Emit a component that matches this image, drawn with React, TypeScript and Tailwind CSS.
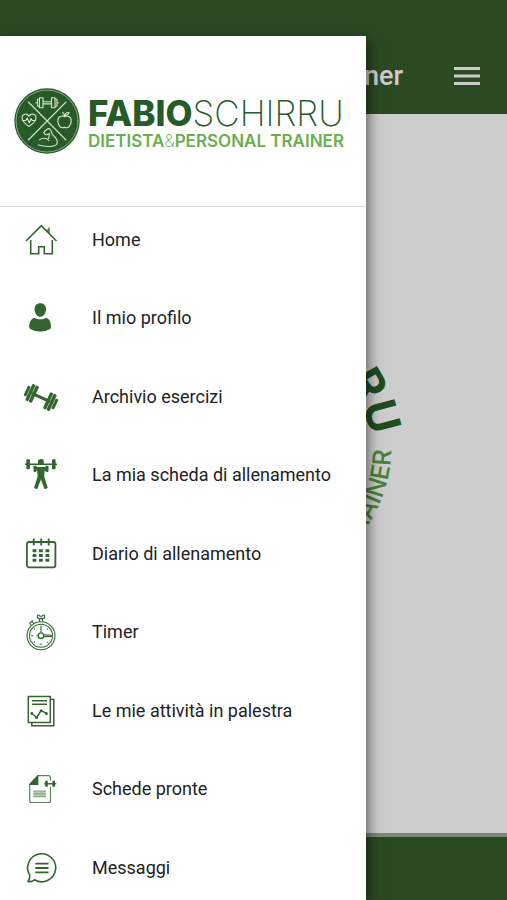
import type { ReactNode } from "react";

type MenuItem = {
  label: string;
  icon: ReactNode;
};

const icon = "w-8 h-8 shrink-0 overflow-visible text-[#33652f]";

function HomeIcon() {
  return (
    <svg className={icon} viewBox="0 0 32 32" fill="none" stroke="currentColor" strokeWidth="1.6">
      <path d="M1 17 16.3 1.6 31.5 17" />
      <path d="M5.7 16v13.7h8v-6.9h5.6v6.9h8V16" />
      <path d="M21.3 6.2h2.6M24 3.6v6" strokeWidth="1.3" />
    </svg>
  );
}

function ProfileIcon() {
  return (
    <svg className={icon} viewBox="0 0 32 32" fill="currentColor">
      <path d="M15.3 1.2c3.8 0 5.8 2.4 5.7 6-.1 4-2.4 7.6-5.7 7.6S9.7 11.2 9.6 7.200c-.1-3.600 1.900-6 5.700-6Z" />
      <path d="M9.5 15.7c3.2 2.2 8.400 2.200 11.600 0 3.600 1 5 4.500 4.900 9.800-.1 1.600-4.800 4-10.700 4S4.300 27.100 4.200 25.500c-.1-5.300 1.700-8.800 5.300-9.800Z" />
    </svg>
  );
}

function DumbbellIcon() {
  return (
    <svg className={icon} viewBox="0 0 32 32" fill="currentColor">
      <g transform="rotate(25 16 16.5)">
        <rect x="6" y="15" width="20" height="3" />
        <rect x="-.8" y="11" width="3" height="11" rx="1" />
        <rect x="2.6" y="7.5" width="3.4" height="18" rx="1" />
        <rect x="6.4" y="7.5" width="3.4" height="18" rx="1" />
        <rect x="22.2" y="7.5" width="3.4" height="18" rx="1" />
        <rect x="26" y="7.5" width="3.4" height="18" rx="1" />
        <rect x="29.8" y="11" width="3" height="11" rx="1" />
      </g>
    </svg>
  );
}

function LifterIcon() {
  return (
    <svg className={icon} viewBox="0 0 32 32" fill="currentColor">
      <rect x="1.3" y=".3" width="3.6" height="10" rx=".8" />
      <rect x="27" y=".3" width="3.6" height="10" rx=".8" />
      <path d="M0 4.500h32v1.500H0Z" />
      <circle cx="15.9" cy="3" r="3" />
      <path d="M8.500 6.800h3v1l2 .2h5l2-.2v-1h3v5.400c0 1-2.700 1-2.900 0l-.9-1-.5 6.300 3.600 11.500-3.200 1.200-3.700-9.700-3.700 9.700L9 29l3.600-11.500-.5-6.300-.8 1c-.2 1-2.800 1-2.800 0Z" />
    </svg>
  );
}

function CalendarIcon() {
  return (
    <svg className={icon} viewBox="0 0 32 32" fill="none" stroke="currentColor" strokeWidth="1.8">
      <rect x="1.9" y="4" width="28.5" height="25.3" rx="2" />
      <path d="M8.700.4v7.200M16.200.4v7.200M23.700.4v7.200" />
      <path d="M7.600 12.800h3.800m2.600 0h3.800m2.700 0h3.800M7.600 17.500h3.800m2.600 0h3.800m2.700 0h3.800M7.600 22.200h3.800m2.600 0h3.800m2.700 0h3.800" strokeWidth="2.9" />
    </svg>
  );
}

function TimerIcon() {
  return (
    <svg className={icon} viewBox="0 0 32 32" fill="none" stroke="currentColor" strokeWidth="1.1">
      <circle cx="16" cy="19.7" r="14" />
      <circle cx="16" cy="19.7" r="11.5" />
      <path d="M14.500 5.600V2.800h3v2.800M12.500-.8h1.800l.7 1h2l.7-1h1.800v3h-7Z" />
      <path d="m8.800 7.900-1.600-2.600-2.600 1.700L6.300 9.500M6.200 5.400l1.600-1" />
      <path d="M16 9.500v6.800M16 27.300v2M6 19.700h2.500m3 0h1.200m6.600-.8 6.700.3.600.6-.6.600-6.700.2" />
      <circle cx="16" cy="19.7" r="2.8" strokeWidth="1.4" />
      <path d="m9 12.700.8.8m13.200-.8-.8.8M9 26.700l.8-.8m13.200.8-.8-.8" />
    </svg>
  );
}

function ReportIcon() {
  return (
    <svg className={icon} viewBox="0 0 32 32" fill="none" stroke="currentColor" strokeWidth="1.5">
      <rect x="3.3" y="1.5" width="22" height="26" />
      <path d="M25.300 4.500H28.800v26.200H6.800v-3.200" />
      <path d="M7 5.800h15M7 9.300h15" />
      <path d="m6.800 18.500 4.900 4 4.400-6.800 5.300 2.700" />
      <g fill="currentColor" stroke="none">
        <circle cx="6.8" cy="18.5" r="1.4" />
        <circle cx="11.7" cy="22.5" r="1.5" />
        <circle cx="16.1" cy="15.7" r="1.5" />
        <circle cx="21.4" cy="18.4" r="1.5" />
      </g>
    </svg>
  );
}

function SheetIcon() {
  return (
    <svg className={icon} viewBox="0 0 32 32" fill="none" stroke="currentColor" strokeWidth="1.2">
      <path d="M25.500 7.500V4.600c0-1.400-.7-2-2-2H13L4.700 11.200v16.300c0 1.300.7 2 2 2h16.800c1.300 0 2-.7 2-2V14" strokeOpacity=".8" />
      <path d="M12.800 3v8.500H5Z" fill="currentColor" />
      <path d="M8.300 17.600h12.600v6.600H8.300Z" fill="currentColor" fillOpacity=".35" stroke="none" />
      <path d="M8.300 18.200h12.600M8.300 20.900h12.600M8.300 23.600h12.600" strokeOpacity=".3" />
      <path d="M19.300 10.800h12" strokeWidth="1.5" />
      <path d="M21.500 7.800v6M28.700 7.800v6" strokeWidth="2.6" />
    </svg>
  );
}

function MessageIcon() {
  return (
    <svg className={icon} viewBox="0 0 32 32" fill="none" stroke="currentColor" strokeWidth="1.6" strokeLinejoin="round">
      <path d="M4.800 23.200A14 14 0 1 1 9.500 27.800c-1.800 1.500-4 2.200-6.600 1.700 1.500-1.700 2.200-3.700 1.900-6.300Z" />
      <path d="M10.300 11.700h13.200M10.300 16h13.200M10.300 20.300h13.200" strokeWidth="1.8" />
    </svg>
  );
}

const items: MenuItem[] = [
  { label: "Home", icon: <HomeIcon /> },
  { label: "Il mio profilo", icon: <ProfileIcon /> },
  { label: "Archivio esercizi", icon: <DumbbellIcon /> },
  { label: "La mia scheda di allenamento", icon: <LifterIcon /> },
  { label: "Diario di allenamento", icon: <CalendarIcon /> },
  { label: "Timer", icon: <TimerIcon /> },
  { label: "Le mie attività in palestra", icon: <ReportIcon /> },
  { label: "Schede pronte", icon: <SheetIcon /> },
  { label: "Messaggi", icon: <MessageIcon /> },
];

/* Round badge: dumbbell, apple, arm and heart around a cross */
function Emblem() {
  return (
    <g fill="none" stroke="#d5e6d0" strokeWidth="1.1" strokeLinecap="round" strokeLinejoin="round">
      <circle cx="33" cy="33" r="32.7" fill="#275a28" stroke="none" />
      <circle cx="33" cy="33" r="31" strokeWidth=".7" strokeOpacity=".8" />
      <path d="m14.300 14 37.700 38M52 14 14.300 52" />
      {/* dumbbell */}
      <path d="M29 13.700h8.500v2.200H29ZM25.500 9.800H29v10h-3.500ZM37.500 9.800H41v10h-3.500ZM25.500 11.300h-2v7h2M41 11.300h2v7h-2M23.500 14.800h-1.700M43 14.800h1.700" />
      {/* heart */}
      <path d="M15 38.500c-3.500-2.500-7-5.500-7-8.800 0-4 5.200-4.800 7-1.400 1.800-3.400 7-2.600 7 1.400 0 3.300-3.500 6.300-7 8.800Z" />
      <path d="M8.500 32.500h3.300l1.500-2.500 2 5 1.900-4.500 1 2h3" />
      {/* apple */}
      <path d="M50.500 28.700c-2.500-1.600-6.700-.6-6.700 4.100 0 3.500 2.200 7 4.500 7 .8 0 1.300-.4 2.200-.4s1.400.4 2.200.4c2.300 0 4.500-3.500 4.500-7 0-4.700-4.200-5.700-6.700-4.100Zm0 0c0-2-.6-3.200-2-4.300m2.200 2.700c.7-2 2.100-2.900 4.300-2.600-.4 2-2 3-4.300 2.600" />
      {/* arm */}
      <path d="M30 44.500c1-2.500 4-4.300 5.800-3.700 1.500 1.800 2 3.800 2.700 6 3 2.500 5 4.500 4.800 7.200-.3 2.800-2.300 4-5 4.200-4.500.6-9 .2-14-1.200" />
      <path d="M30 44.500c0 1.500 1 2.300 2.500 2.200l3-1.200c0 2-.3 3.500-1 5M25.500 51.800c3-1.800 7-2 9.500.7" />
    </g>
  );
}

function RoundLogo() {
  return (
    <svg className="w-[310px] h-[310px] shrink-0 overflow-visible" viewBox="0 0 310 310">
      <defs>
        <path id="arc-top" d="M38 155A117 117 0 0 1 271 143" />
        <path id="arc-bottom" d="M18 155A137 137 0 0 0 292 157" />
      </defs>
      <g transform="translate(56 56) scale(3)">
        <Emblem />
      </g>
      <text className="font-[Inter,sans-serif] text-[44px] font-bold" textAnchor="end" fill="#27602a">
        <textPath href="#arc-top" startOffset="100%">
          SCHIRRU
        </textPath>
      </text>
      <text className="font-[Inter,sans-serif] text-[25px] font-medium" textAnchor="end" fill="#5ba344">
        <textPath href="#arc-bottom" startOffset="100%">
          TRAINER
        </textPath>
      </text>
    </svg>
  );
}

function BrandLogo() {
  return (
    <div className="flex items-center gap-2 font-[Inter,sans-serif]">
      <svg className="w-[66px] h-[66px] shrink-0" viewBox="0 0 66 66">
        <Emblem />
      </svg>
      <div className="pt-1 whitespace-nowrap">
        <p className="text-[35px] leading-9 text-[#275a28]">
          <span className="font-extrabold">FABIO</span>
          <span className="font-extralight">SCHIRRU</span>
        </p>
        <p className="text-[17px] leading-5 font-semibold text-[#69ae50]">
          DIETISTA<span className="font-extralight">&amp;</span>PERSONAL TRAINER
        </p>
      </div>
    </div>
  );
}

function Drawer() {
  return (
    <aside className="absolute left-0 top-9 bottom-0 w-[366px] max-w-full flex flex-col bg-white shadow-[3px_4px_12px_rgba(0,0,0,0.5)]">
      <div className="h-[171px] shrink-0 flex items-center pl-3.5 border-b border-[#d8d8d8]">
        <BrandLogo />
      </div>
      <nav className="flex-1 flex">
        <ul className="flex-1 flex flex-col justify-between">
          {items.map((item) => (
            <li key={item.label}>
              <a href="#" className="h-[65px] pl-[25px] flex items-center gap-[35px] text-lg text-[#222222]">
                {item.icon}
                {item.label}
              </a>
            </li>
          ))}
        </ul>
      </nav>
    </aside>
  );
}

export default function App() {
  return (
    <div className="relative min-h-screen flex flex-col overflow-hidden bg-white font-[Roboto,sans-serif]">
      <header className="h-[114px] pt-[38px] pr-6 flex items-center justify-end gap-12 bg-[#365d2e] text-white">
        <h1 className="text-[27px] font-medium whitespace-nowrap">Personal Trainer</h1>
        <button type="button" aria-label="Menu" className="w-8 h-8 flex items-center justify-center">
          <svg className="w-[26px] h-[18px]" viewBox="0 0 26 18" fill="currentColor">
            <path d="M0 0h26v3H0ZM0 7.500h26v3H0ZM0 15h26v3H0Z" />
          </svg>
        </button>
      </header>

      <main className="flex-1 pb-[52px] flex items-center justify-center">
        <RoundLogo />
      </main>

      <footer className="h-[67px] border-t-4 border-[#98ae95] bg-[#365d2e]" />

      {/* Backdrop behind the open drawer */}
      <div className="absolute inset-0 bg-black/20" />
      <Drawer />
    </div>
  );
}
